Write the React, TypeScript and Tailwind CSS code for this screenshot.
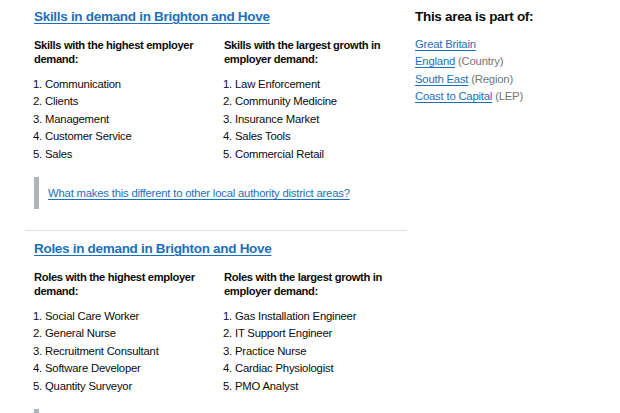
// @ts-nocheck
const skillsTop = ['Communication', 'Clients', 'Management', 'Customer Service', 'Sales'];
const skillsGrowth = ['Law Enforcement', 'Community Medicine', 'Insurance Market', 'Sales Tools', 'Commercial Retail'];
const rolesTop = ['Social Care Worker', 'General Nurse', 'Recruitment Consultant', 'Software Developer', 'Quantity Surveyor'];
const rolesGrowth = ['Gas Installation Engineer', 'IT Support Engineer', 'Practice Nurse', 'Cardiac Physiologist', 'PMO Analyst'];

const areas = [
  { name: 'Great Britain' },
  { name: 'England', kind: 'Country' },
  { name: 'South East', kind: 'Region' },
  { name: 'Coast to Capital', kind: 'LEP' },
];

function RankList({ title, items, className }) {
  return (
    <div className={className}>
      <h3 className="text-[11.2px] leading-[14px] font-bold tracking-[-0.35px] text-[#0b0c0c]">{title}</h3>
      <ol className="mt-[10px] list-decimal pl-[11px] text-[11.3px] leading-[17.4px] tracking-[-0.2px] text-[#0b0c0c]">
        {items.map((item) => (
          <li key={item}>{item}</li>
        ))}
      </ol>
    </div>
  );
}

function DemandSection({ heading, noun, top, growth }) {
  return (
    <section className="px-[9px]">
      <h2 className="text-[13.5px] leading-[18px] font-bold tracking-[-0.3px]">
        <a href="#" className="text-[#1d70b8] underline decoration-1 underline-offset-[2px]">
          {heading}
        </a>
      </h2>
      <div className="mt-[12px] flex">
        <RankList className="w-[190px] shrink-0 pr-[10px]" title={`${noun} with the highest employer demand:`} items={top} />
        <RankList className="w-[170px]" title={`${noun} with the largest growth in employer demand:`} items={growth} />
      </div>
      <div className="mt-[14px] border-l-[5px] border-[#b1b4b6] py-[7px] pl-[9px] text-[11.3px] leading-[18px] tracking-[-0.2px]">
        <a href="#" className="text-[#1d70b8] underline decoration-1 underline-offset-[2px]">
          What makes this different to other local authority district areas?
        </a>
      </div>
    </section>
  );
}

export default function App() {
  return (
    <div className="min-h-[413px] bg-white font-['Liberation_Sans',Arial,sans-serif] text-[#0b0c0c]">
      <div className="flex px-[25px] pt-[8px]">
        <div className="w-[382px] shrink-0">
          <DemandSection
            heading="Skills in demand in Brighton and Hove"
            noun="Skills"
            top={skillsTop}
            growth={skillsGrowth}
          />
          <div className="mt-[21px] border-t border-[#dcdddd] pt-[9px]">
            <DemandSection
              heading="Roles in demand in Brighton and Hove"
              noun="Roles"
              top={rolesTop}
              growth={rolesGrowth}
            />
          </div>
        </div>

        <aside className="ml-[8px]">
          <h2 className="text-[13.5px] leading-[18px] font-bold tracking-[-0.3px]">This area is part of:</h2>
          <ul className="mt-[10px] text-[11.3px] leading-[17.4px] tracking-[-0.2px]">
            {areas.map((a) => (
              <li key={a.name}>
                <a href="#" className="text-[#1d70b8] underline decoration-1 underline-offset-[2px]">
                  {a.name}
                </a>
                {a.kind && <span className="text-[#6f777b]"> ({a.kind})</span>}
              </li>
            ))}
          </ul>
        </aside>
      </div>
    </div>
  );
}
